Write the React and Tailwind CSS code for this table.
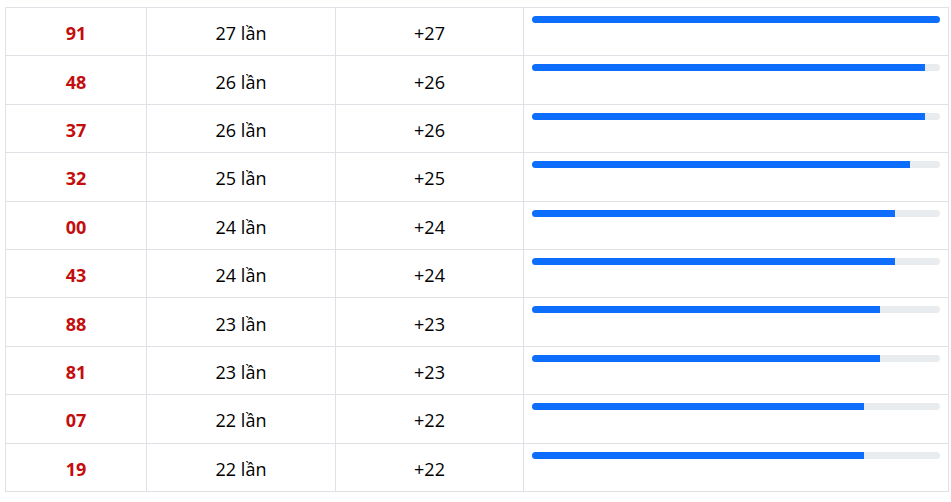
const rows = [
  { num: "91", count: 27 },
  { num: "48", count: 26 },
  { num: "37", count: 26 },
  { num: "32", count: 25 },
  { num: "00", count: 24 },
  { num: "43", count: 24 },
  { num: "88", count: 23 },
  { num: "81", count: 23 },
  { num: "07", count: 22 },
  { num: "19", count: 22 },
];

export default function App() {
  const max = Math.max(...rows.map((r) => r.count));

  return (
    <div className="min-h-screen bg-white pl-[5px] pt-[7px] font-['Open_Sans','Noto_Sans',sans-serif] text-[18px] text-black">
      <table className="w-[944px] table-fixed border-collapse border border-[#dee2e6]">
        <colgroup>
          <col className="w-[141px]" />
          <col className="w-[189px]" />
          <col className="w-[188px]" />
          <col />
        </colgroup>
        <tbody>
          {rows.map((r) => (
            <tr key={r.num} className="h-[48.4px]">
              <td className="border border-[#dee2e6] pt-1 text-center align-middle font-bold text-[#c40d0d]">
                {r.num}
              </td>
              <td className="border border-[#dee2e6] pt-1 text-center align-middle">
                {r.count} lần
              </td>
              <td className="border border-[#dee2e6] pt-1 text-center align-middle">
                +{r.count}
              </td>
              <td className="border border-[#dee2e6] px-2 pt-[8px] align-top">
                <div className="h-[7px] w-full overflow-hidden rounded-full bg-[#e9ecef]">
                  <div
                    className="h-full bg-[#0d6efd]"
                    style={{ width: `${(r.count / max) * 100}%` }}
                  />
                </div>
              </td>
            </tr>
          ))}
        </tbody>
      </table>
    </div>
  );
}
